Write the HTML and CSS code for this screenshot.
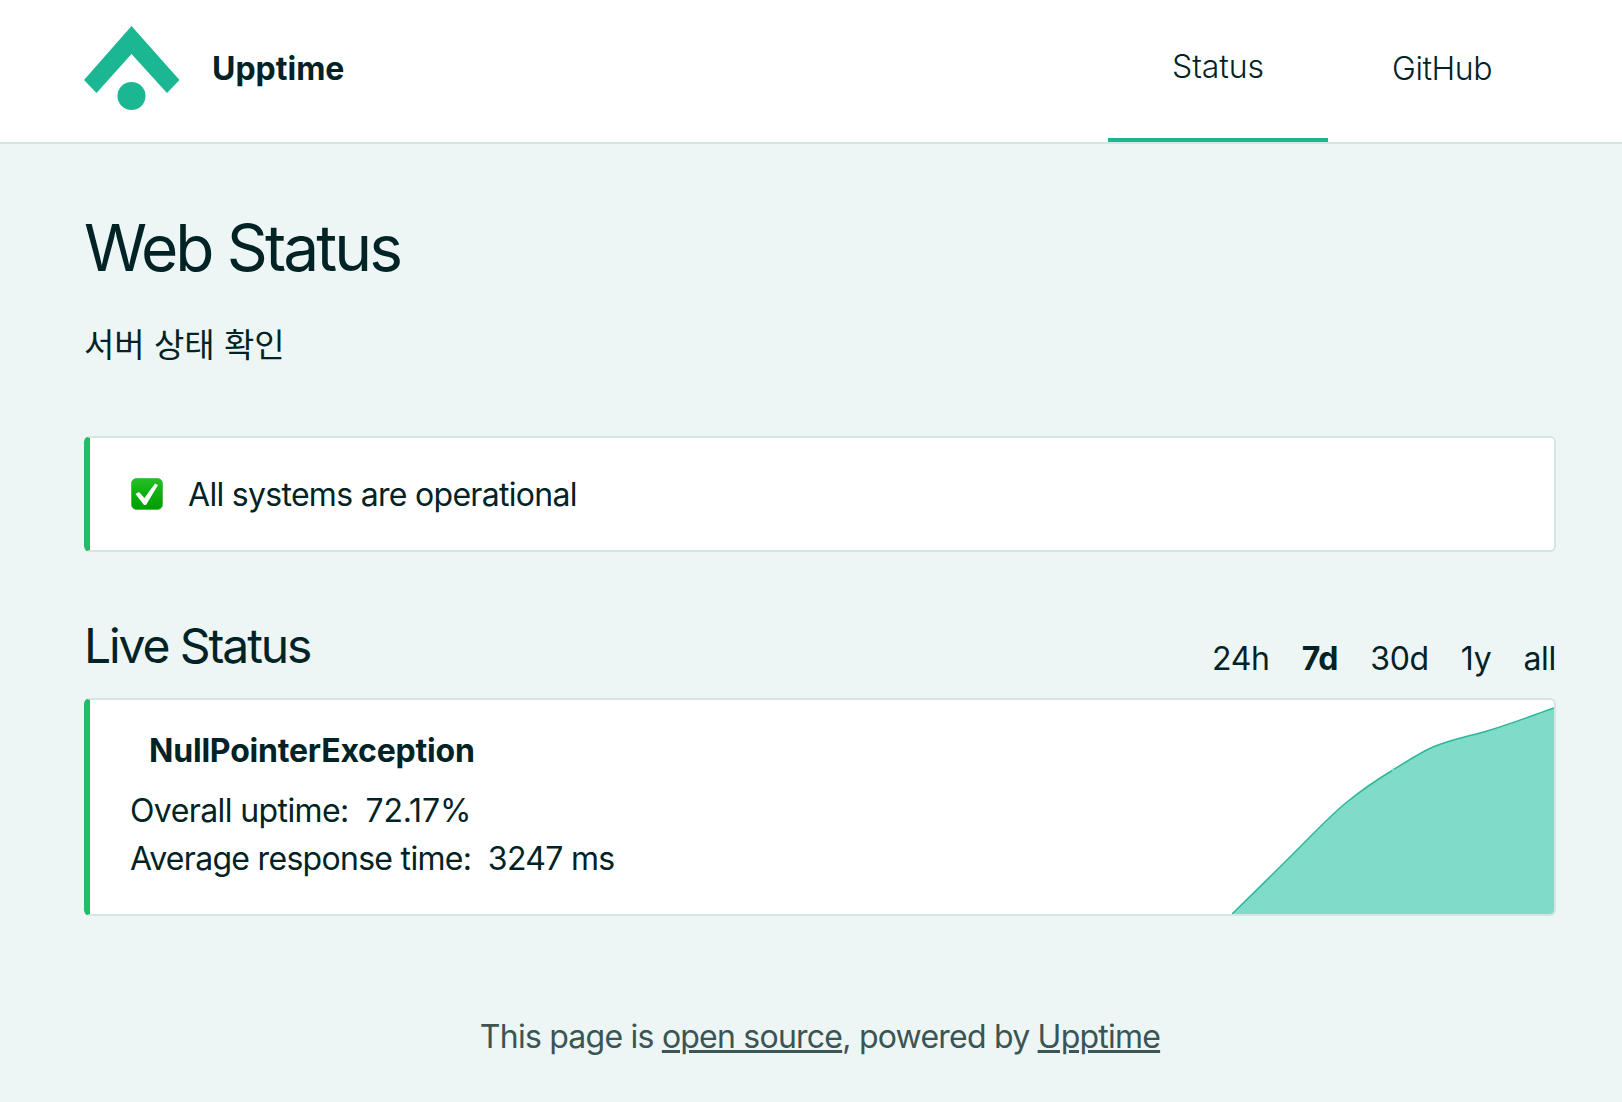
FILE: index.html
```html
<!DOCTYPE html>
<html lang="en">
<head>
<meta charset="utf-8">
<title>Web Status</title>
<link rel="stylesheet" href="styles.css">
</head>
<body>
<header class="site-header">
  <a class="brand" href="#">
    <svg class="logo" viewBox="0 0 96 84" aria-hidden="true">
      <path class="logo-mark" d="M47.5 0 L95.5 54 L83 67 L47.5 28 L12.5 67 L0 54 Z"/>
      <circle class="logo-mark" cx="47.5" cy="70" r="14"/>
    </svg>
    <span class="brand-name">Upptime</span>
  </a>
  <nav class="nav">
    <a class="nav-link active" href="#">Status</a>
    <a class="nav-link" href="#">GitHub</a>
  </nav>
</header>
<main class="content">
  <h1 class="title">Web Status</h1>
  <p class="subtitle">서버 상태 확인</p>
  <section class="card status-card">
    <svg class="check" viewBox="0 0 32 32" aria-hidden="true">
      <defs>
        <linearGradient id="checkbg" x1="0" y1="0" x2="0" y2="1">
          <stop offset="0" stop-color="#22c022"/>
          <stop offset="1" stop-color="#009c00"/>
        </linearGradient>
      </defs>
      <rect x="0.5" y="0.5" width="31" height="31" rx="5" fill="url(#checkbg)" stroke="#4cc24c"/>
      <path d="M4.5 16 L8 14 L13.5 20 L24 5.5 L27 7 L15 27 L13 27 Z" fill="#fff"/>
    </svg>
    <span>All systems are operational</span>
  </section>
  <div class="live-head">
    <h2 class="live-title">Live Status</h2>
    <div class="ranges">
      <span>24h</span><strong>7d</strong><span>30d</span><span>1y</span><span>all</span>
    </div>
  </div>
  <section class="card site-card">
    <h3 class="site-name">NullPointerException</h3>
    <div class="stat stat-uptime">Overall uptime:&nbsp; <span class="stat-value">72.17%</span></div>
    <div class="stat">Average response time:&nbsp; 3247 ms</div>
    <svg class="graph" viewBox="0 0 322 214" preserveAspectRatio="none" aria-hidden="true">
      <path class="graph-fill" d="M0 214 C22.7 192 45.3 169.7 68 147 C83.7 131.3 99.3 114.5 115 102 C130.3 89.7 145.7 79.2 161 70 C174.3 62 187.7 52.6 201 47 C219 39.4 237 36.2 255 31 C277.3 24.5 299.7 15.8 322 8 L322 214 Z"/>
      <path class="graph-line" d="M0 214 C22.7 192 45.3 169.7 68 147 C83.7 131.3 99.3 114.5 115 102 C130.3 89.7 145.7 79.2 161 70 C174.3 62 187.7 52.6 201 47 C219 39.4 237 36.2 255 31 C277.3 24.5 299.7 15.8 322 8"/>
      <circle class="graph-dot" cx="161" cy="70" r="1.5"/>
    </svg>
  </section>
</main>
<footer class="footer">
  This page is <a href="#">open source</a>, powered by <a href="#">Upptime</a>
</footer>
</body>
</html>
```
FILE: styles.css
```css
* { box-sizing: border-box; }
html, body { margin: 0; }
body {
  background: #edf6f5;
  color: #022326;
  font-family: Inter, "Noto Sans CJK KR", sans-serif;
  font-size: 32px;
  letter-spacing: -0.7px;
  height: 1102px;
  overflow: hidden;
}
a { color: inherit; }
.site-header {
  height: 144px;
  background: #fff;
  border-bottom: 2px solid #d5e5e2;
  padding: 0 66px 0 84px;
  display: flex;
  justify-content: space-between;
}
.brand {
  display: flex;
  align-items: center;
  gap: 32px;
  text-decoration: none;
  padding-bottom: 6px;
}
.logo { width: 96px; height: 84px; }
.logo-mark { fill: #1ab792; }
.brand-name { font-weight: 700; letter-spacing: 0; }
.nav { display: flex; }
.nav-link {
  width: 228px;
  display: flex;
  align-items: center;
  justify-content: center;
  text-decoration: none;
  font-weight: 300;
  letter-spacing: -0.45px;
  padding-bottom: 5px;
}
.nav-link.active {
  width: 220px;
  letter-spacing: -0.1px;
  border-bottom: 4px solid #1ab792;
}
.content { padding: 0 66px 0 84px; }
.title {
  margin: 68px 0 0;
  font-size: 64px;
  line-height: 72px;
  font-weight: 400;
  letter-spacing: -2.9px;
}
.subtitle {
  margin: 37px 0 0;
  font-size: 33px;
  line-height: 48px;
  letter-spacing: 0;
}
.card {
  background: #fff;
  border: 2px solid #d5e5e2;
  border-left: 6px solid #1fbd68;
  border-radius: 6px;
}
.status-card {
  margin-top: 67px;
  height: 116px;
  padding-left: 41px;
  display: flex;
  align-items: center;
  gap: 25px;
}
.check { width: 32px; height: 32px; }
.live-head {
  margin-top: 67px;
  display: flex;
  justify-content: space-between;
  align-items: flex-end;
}
.live-title {
  margin: 0;
  font-size: 48px;
  line-height: 54px;
  font-weight: 400;
  letter-spacing: -2.1px;
}
.ranges {
  display: flex;
  gap: 32px;
  line-height: 42px;
  margin-bottom: -7px;
  letter-spacing: -0.3px;
}
.ranges strong { font-weight: 700; }
.site-card {
  position: relative;
  margin-top: 25px;
  height: 218px;
  padding: 30px 0 0 40px;
  overflow: hidden;
}
.site-name {
  margin: 0 0 15px 19px;
  font-size: 32px;
  line-height: 42px;
  font-weight: 700;
  letter-spacing: -0.2px;
}
.stat { line-height: 48px; }
.stat-uptime { letter-spacing: -0.6px; }
.stat-value { letter-spacing: -0.15px; }
.graph {
  position: absolute;
  right: 0;
  bottom: 0;
  width: 322px;
  height: 214px;
}
.graph-fill { fill: #80dcc8; }
.graph-line { fill: none; stroke: #2bb898; stroke-width: 1.5; }
.graph-dot { fill: #80dcc8; }
.footer {
  margin-top: 98px;
  text-align: center;
  color: #3a5555;
  padding-left: 18px;
  line-height: 46px;
  letter-spacing: -0.77px;
}
```
